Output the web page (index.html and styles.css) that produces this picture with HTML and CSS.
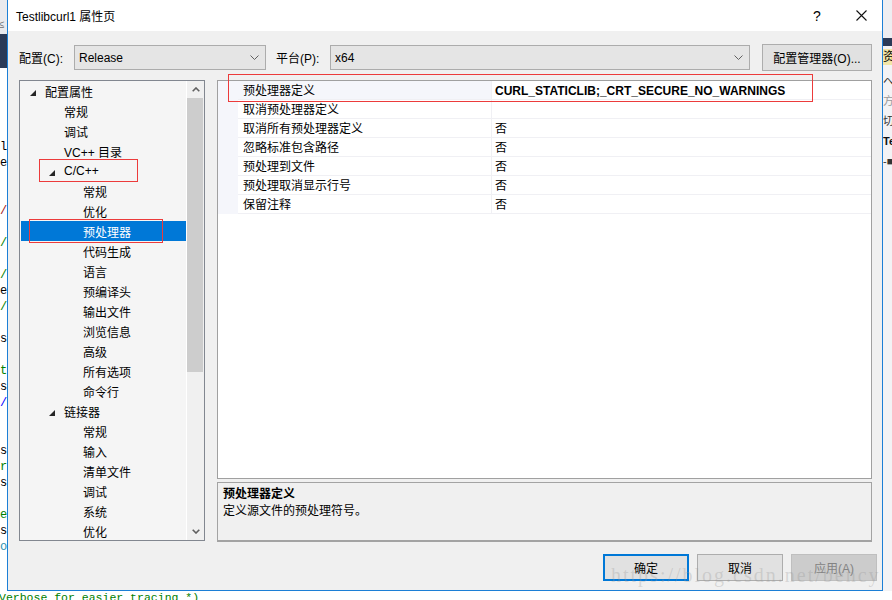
FILE: index.html
```html
<!DOCTYPE html>
<html>
<head>
<meta charset="utf-8">
<link rel="stylesheet" href="styles.css">
</head>
<body>
<div class="desktop">
  <div class="ide-left">
    <div class="il-top"><span class="il-glyph">≤</span></div>
    <div class="il-nav"></div>
    <div class="il-code">
      <div class="cl">l</div>
      <div class="cl">e</div>
      <div class="cl"></div>
      <div class="cl"></div>
      <div class="cl c-red">/</div>
      <div class="cl"></div>
      <div class="cl c-green">/</div>
      <div class="cl"></div>
      <div class="cl c-green">/</div>
      <div class="cl">e</div>
      <div class="cl c-green">/</div>
      <div class="cl"></div>
      <div class="cl">s</div>
      <div class="cl"></div>
      <div class="cl c-green">t</div>
      <div class="cl">s</div>
      <div class="cl c-blue">/</div>
      <div class="cl"></div>
      <div class="cl"></div>
      <div class="cl">s</div>
      <div class="cl c-green">r</div>
      <div class="cl">s</div>
      <div class="cl"></div>
      <div class="cl c-green">e</div>
      <div class="cl">s</div>
      <div class="cl c-teal">o</div>
    </div>
  </div>

  <div class="dialog">
    <div class="titlebar">
      <div class="title">Testlibcurl1 属性页</div>
      <div class="tb-btn help">?</div>
      <div class="tb-btn close">
        <svg width="11" height="11" viewBox="0 0 11 11"><path d="M0.5 0.5 L10.5 10.5 M10.5 0.5 L0.5 10.5" stroke="#111" stroke-width="1.1" fill="none"/></svg>
      </div>
    </div>

    <div class="toolbar">
      <div class="lbl lbl-config">配置(C):</div>
      <div class="select select-config">
        <span>Release</span>
        <svg width="9" height="5" viewBox="0 0 9 5"><path d="M0.5 0.5 L4.5 4.5 L8.5 0.5" stroke="#606060" stroke-width="1" fill="none"/></svg>
      </div>
      <div class="lbl lbl-platform">平台(P):</div>
      <div class="select select-platform">
        <span>x64</span>
        <svg width="9" height="5" viewBox="0 0 9 5"><path d="M0.5 0.5 L4.5 4.5 L8.5 0.5" stroke="#606060" stroke-width="1" fill="none"/></svg>
      </div>
      <div class="btn btn-manager">配置管理器(O)...</div>
    </div>

    <div class="main">
      <div class="tree">
        <div class="tree-list">
          <div class="row lv0"><span class="tog"><svg width="6" height="6" viewBox="0 0 6 6"><polygon points="6,0 6,6 0,6" fill="#262626"/></svg></span>配置属性</div>
          <div class="row lv1"><span class="tog"></span>常规</div>
          <div class="row lv1"><span class="tog"></span>调试</div>
          <div class="row lv1"><span class="tog"></span>VC++ 目录</div>
          <div class="row lv1"><span class="tog"><svg width="6" height="6" viewBox="0 0 6 6"><polygon points="6,0 6,6 0,6" fill="#262626"/></svg></span>C/C++</div>
          <div class="row lv2"><span class="tog"></span>常规</div>
          <div class="row lv2"><span class="tog"></span>优化</div>
          <div class="row lv2 selected"><span class="tog"></span>预处理器</div>
          <div class="row lv2"><span class="tog"></span>代码生成</div>
          <div class="row lv2"><span class="tog"></span>语言</div>
          <div class="row lv2"><span class="tog"></span>预编译头</div>
          <div class="row lv2"><span class="tog"></span>输出文件</div>
          <div class="row lv2"><span class="tog"></span>浏览信息</div>
          <div class="row lv2"><span class="tog"></span>高级</div>
          <div class="row lv2"><span class="tog"></span>所有选项</div>
          <div class="row lv2"><span class="tog"></span>命令行</div>
          <div class="row lv1"><span class="tog"><svg width="6" height="6" viewBox="0 0 6 6"><polygon points="6,0 6,6 0,6" fill="#262626"/></svg></span>链接器</div>
          <div class="row lv2"><span class="tog"></span>常规</div>
          <div class="row lv2"><span class="tog"></span>输入</div>
          <div class="row lv2"><span class="tog"></span>清单文件</div>
          <div class="row lv2"><span class="tog"></span>调试</div>
          <div class="row lv2"><span class="tog"></span>系统</div>
          <div class="row lv2"><span class="tog"></span>优化</div>
        </div>
        <div class="tree-sep"></div>
        <div class="vscroll">
          <div class="sb-arrow">
            <svg width="8" height="5" viewBox="0 0 8 5"><path d="M0.7 4.3 L4 1 L7.3 4.3" stroke="#606060" stroke-width="1.6" fill="none"/></svg>
          </div>
          <div class="sb-track">
            <div class="sb-thumb"></div>
          </div>
          <div class="sb-arrow">
            <svg width="8" height="5" viewBox="0 0 8 5"><path d="M0.7 0.7 L4 4 L7.3 0.7" stroke="#606060" stroke-width="1.6" fill="none"/></svg>
          </div>
        </div>
      </div>

      <div class="right-col">
        <div class="grid">
          <div class="grow focused"><div class="gutter"></div><div class="gname">预处理器定义</div><div class="gval bold">CURL_STATICLIB;_CRT_SECURE_NO_WARNINGS</div></div>
          <div class="grow"><div class="gutter"></div><div class="gname">取消预处理器定义</div><div class="gval"></div></div>
          <div class="grow"><div class="gutter"></div><div class="gname">取消所有预处理器定义</div><div class="gval">否</div></div>
          <div class="grow"><div class="gutter"></div><div class="gname">忽略标准包含路径</div><div class="gval">否</div></div>
          <div class="grow"><div class="gutter"></div><div class="gname">预处理到文件</div><div class="gval">否</div></div>
          <div class="grow"><div class="gutter"></div><div class="gname">预处理取消显示行号</div><div class="gval">否</div></div>
          <div class="grow"><div class="gutter"></div><div class="gname">保留注释</div><div class="gval">否</div></div>
        </div>
        <div class="desc">
          <div class="desc-title">预处理器定义</div>
          <div class="desc-text">定义源文件的预处理符号。</div>
        </div>
      </div>
    </div>

    <div class="footer">
      <div class="btn fbtn primary">确定</div>
      <div class="btn fbtn">取消</div>
      <div class="btn fbtn disabled">应用(A)</div>
    </div>
  </div>

  <div class="ide-right">
    <div class="ir-a"></div>
    <div class="ir-b"></div>
    <div class="ir-c">资</div>
    <div class="ir-d"><span class="ir-g">へ</span><span class="ir-g gray">方</span><span class="ir-g">切</span><span class="ir-g bold">Te</span><span class="ir-g">-■</span></div>
    <div class="ir-e"></div>
  </div>

  <div class="ide-bottom">Verbose for easier tracing *)</div>

  <div class="mark mark-prop"></div>
  <div class="mark mark-cpp"></div>
  <div class="mark mark-pre"></div>
  <div class="watermark">https://blog.csdn.net/bency</div>
</div>
</body>
</html>
```

FILE: styles.css
```css
* { box-sizing: border-box; }

body {
  margin: 0;
  font-family: "Liberation Sans", "Noto Sans CJK SC", sans-serif;
  font-size: 12px;
  color: #000;
}

.desktop {
  position: relative;
  width: 892px;
  height: 600px;
  overflow: hidden;
  display: grid;
  grid-template-columns: 7px 876px 9px;
  grid-template-rows: 591px 9px;
  background: #fff;
}

/* ---------- background IDE ---------- */
.ide-left {
  grid-column: 1;
  grid-row: 1;
  display: flex;
  flex-direction: column;
  overflow: hidden;
}
.il-top {
  height: 34px;
  background: #e9eaee;
  color: #6d6d6d;
  font-size: 11px;
  padding-top: 18px;
  line-height: 12px;
}
.il-glyph { margin-left: -2px; }
.il-nav {
  height: 34px;
  background: #2b3a57;
}
.il-code {
  flex: 1;
  background: #fff;
  padding-top: 71px;
  font-family: "Liberation Mono", monospace;
  font-size: 12px;
}
.cl { height: 16px; line-height: 16px; }
.c-red { color: #a31515; }
.c-green { color: #008000; }
.c-blue { color: #0000ff; }
.c-teal { color: #2b91af; }

.ide-right {
  grid-column: 3;
  grid-row: 1;
  display: flex;
  flex-direction: column;
  overflow: hidden;
  background: #f3f3f5;
}
.ir-a { height: 38px; background: #eeeef2; }
.ir-b { height: 8px; background: #2b3a57; }
.ir-c {
  height: 16px;
  background: #f2e6a8;
  font-size: 12px;
  line-height: 16px;
  margin-top: 3px;
}
.ir-d {
  display: flex;
  flex-direction: column;
  padding-top: 10px;
  gap: 8px;
  font-size: 11px;
  line-height: 12px;
}
.ir-g { color: #333; }
.ir-g.gray { color: #999; }
.ir-g.bold { font-weight: bold; color: #111; }
.ir-e { flex: 1; }

.ide-bottom {
  grid-column: 1 / -1;
  grid-row: 2;
  background: #fff;
  color: #008000;
  font-family: "Liberation Mono", monospace;
  font-size: 11.5px;
  line-height: 12px;
  overflow: hidden;
  white-space: nowrap;
  margin-left: -1px;
  padding-top: 1px;
}

/* ---------- dialog ---------- */
.dialog {
  grid-column: 2;
  grid-row: 1;
  display: flex;
  flex-direction: column;
  background: #f0f0f0;
  border: 1px solid #1c7fd6;
  border-top: none;
}

.titlebar {
  height: 31px;
  flex: none;
  background: #fff;
  display: flex;
  align-items: center;
  padding-left: 8px;
}
.title { flex: 1; font-size: 12px; }
.tb-btn {
  height: 31px;
  display: flex;
  align-items: center;
  justify-content: center;
}
.tb-btn.help { width: 46px; font-size: 14px; }
.tb-btn.close { width: 42px; }

.toolbar {
  display: flex;
  align-items: center;
  margin-top: 13px;
  padding: 0 10px 0 11px;
  height: 27px;
}
.lbl { flex: none; }
.lbl-config { width: 55px; }
.lbl-platform { width: 54px; margin-left: 10px; }
.select {
  height: 25px;
  flex: none;
  background: #e5e5e5;
  border: 1px solid #acacac;
  display: flex;
  align-items: center;
  justify-content: space-between;
  padding: 0 6px 0 4px;
}
.select-config { width: 192px; }
.select-platform { width: 420px; }
.btn {
  height: 27px;
  background: #e1e1e1;
  border: 1px solid #adadad;
  display: flex;
  align-items: center;
  justify-content: center;
}
.btn-manager { width: 110px; margin-left: 12px; }

.main {
  display: flex;
  gap: 12px;
  margin-top: 9px;
  padding: 0 10px 0 11px;
  height: 462px;
}

.tree {
  width: 186px;
  height: 461px;
  flex: none;
  border: 1px solid #828790;
  background: #f5f5f5;
  display: flex;
}
.tree-list {
  width: 166px;
  flex: none;
  overflow: hidden;
}
.tree-sep { width: 1px; background: #fff; }
.row {
  height: 20px;
  margin-left: 1px;
  display: flex;
  align-items: center;
  white-space: nowrap;
}
.row.lv0 { padding-left: 9px; }
.row.lv1 { padding-left: 28px; }
.row.lv2 { padding-left: 47px; }
.row.selected { background: #0078d7; color: #fff; }
.tog {
  width: 15px;
  flex: none;
  display: flex;
  align-items: center;
  padding-top: 3px;
}

.vscroll {
  width: 17px;
  flex: none;
  background: #f0f0f0;
  display: flex;
  flex-direction: column;
}
.sb-arrow {
  height: 17px;
  flex: none;
  display: flex;
  align-items: center;
  justify-content: center;
}
.sb-track { flex: 1; }
.sb-thumb {
  height: 274px;
  margin-right: 1px;
  background: #cdcdcd;
}

.right-col {
  flex: 1;
  display: flex;
  flex-direction: column;
  gap: 3px;
}

.grid {
  height: 399px;
  flex: none;
  border: 1px solid #a0a0a0;
  background: #fff;
}
.grow {
  height: 19px;
  display: flex;
}
.gutter {
  width: 20px;
  flex: none;
  background: #f5f6fb;
}
.gname {
  width: 253px;
  flex: none;
  padding: 2px 0 0 5px;
  line-height: 16px;
  border-bottom: 1px solid #f0f0f4;
  white-space: nowrap;
}
.grow.focused .gname { background: #f5f6fb; }
.gval {
  flex: 1;
  padding: 2px 0 0 3px;
  line-height: 16px;
  border-left: 1px solid #f0f0f4;
  border-bottom: 1px solid #f0f0f4;
  white-space: nowrap;
}
.gval.bold { font-weight: bold; }

.desc {
  height: 60px;
  flex: none;
  background: #f0f0f0;
  border: 1px solid #a3a3a3;
  border-bottom-width: 2px;
  padding: 3px 5px 0;
  line-height: 17px;
}
.desc-title { font-weight: bold; }

.footer {
  display: flex;
  justify-content: flex-end;
  gap: 8px;
  margin-top: 12px;
  padding-right: 5px;
}
.fbtn { width: 86px; }
.fbtn.primary { border: 2px solid #0078d7; }
.fbtn.disabled {
  background: #cccccc;
  border-color: #bfbfbf;
  color: #838383;
}

/* ---------- annotations over the screenshot ---------- */
.mark {
  position: absolute;
  border: 1px solid #ec3b3b;
}
.mark-prop { left: 228px; top: 74px; width: 585px; height: 28px; }
.mark-cpp { left: 39px; top: 159px; width: 99px; height: 23px; }
.mark-pre { left: 29px; top: 219px; width: 134px; height: 24px; }

.watermark {
  position: absolute;
  left: 611px;
  top: 564px;
  font-family: "Liberation Serif", serif;
  font-size: 20px;
  letter-spacing: 2px;
  color: rgba(150, 150, 150, 0.3);
  white-space: nowrap;
}
```
